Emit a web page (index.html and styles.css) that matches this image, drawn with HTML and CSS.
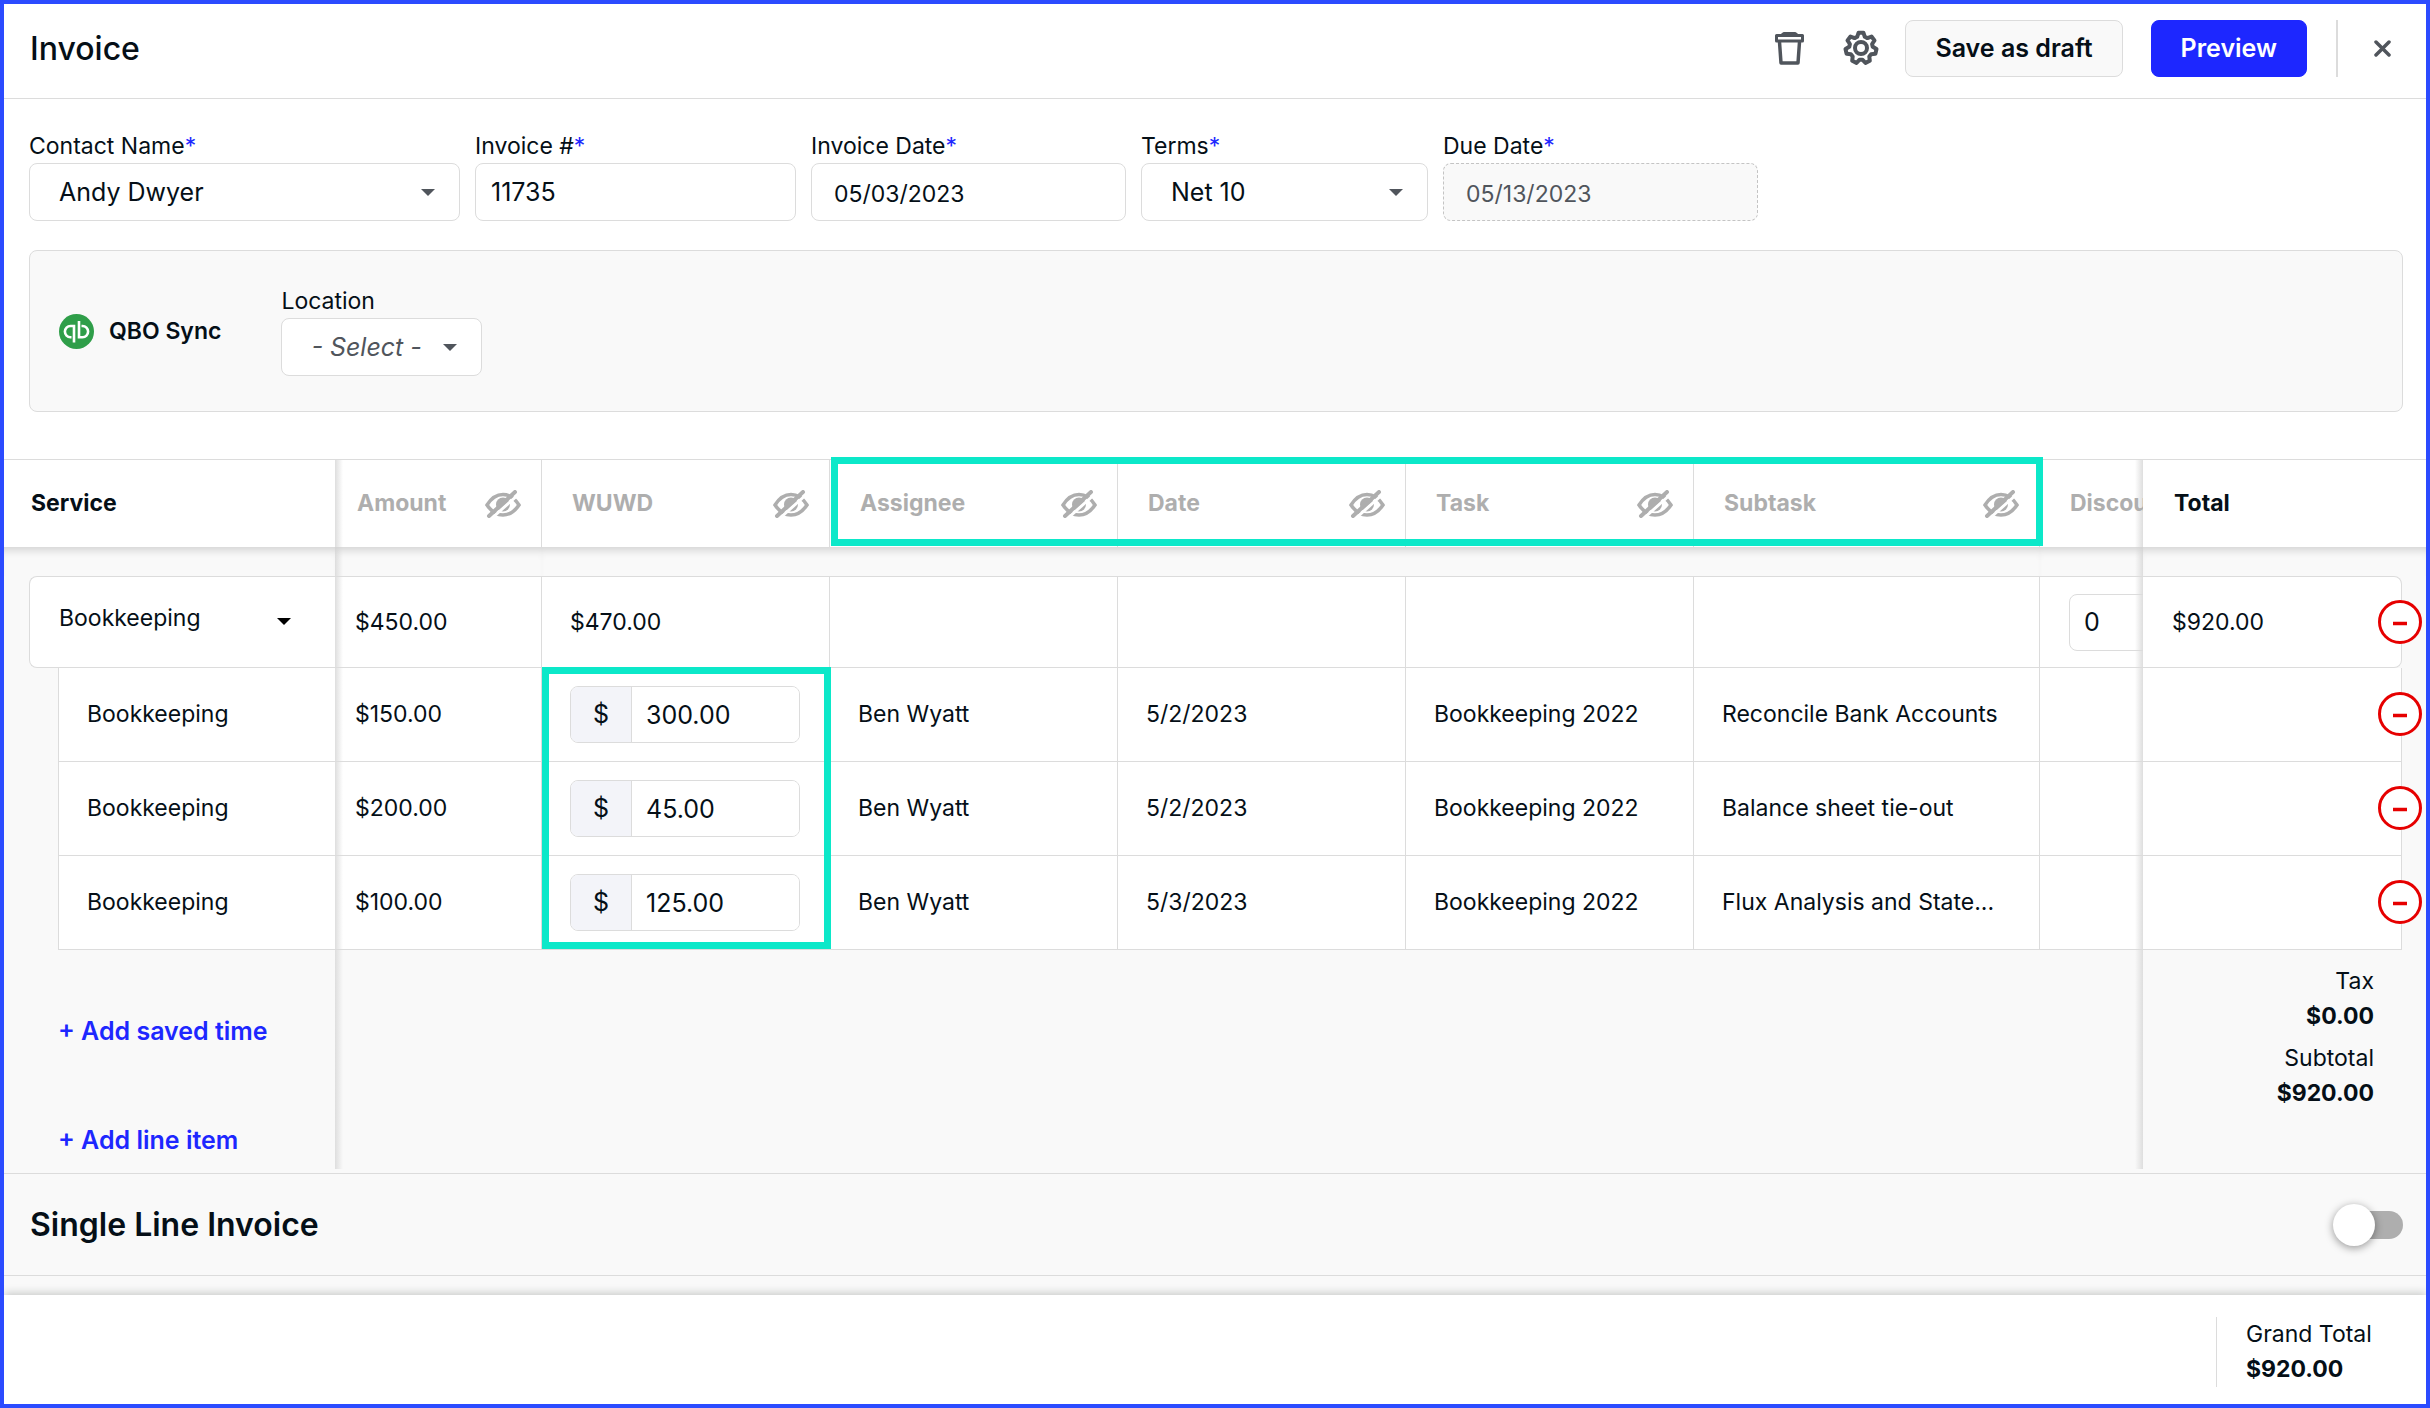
FILE: index.html
```
<!DOCTYPE html>
<html lang="en">
<head>
    <meta charset="UTF-8">
    <meta name="viewport" content="width=device-width, initial-scale=1.0">
    <title>Invoice</title>
    <link rel="stylesheet" href="styles.css">
</head>
<body>
    <!-- shared icons -->
    <svg class="sprite" aria-hidden="true">
        <symbol id="eye-off" viewBox="0 0 36 28">
            <path d="M2 15C7 7 12 4.5 18 4.5S29 7 34 15C29 22.5 24 25 18 25S7 22.5 2 15Z" fill="none" stroke="#aeaeae" stroke-width="3.5"/>
            <circle cx="18" cy="14.5" r="7" fill="#aeaeae"/>
            <path d="M7 28L34 4" stroke="#fff" stroke-width="3"/>
            <path d="M4 26L30 2" stroke="#aeaeae" stroke-width="4" stroke-linecap="round"/>
        </symbol>
        <symbol id="minus" viewBox="0 0 44 44">
            <circle cx="22" cy="22" r="20.5" fill="#fff" stroke="#e60000" stroke-width="3"/>
            <path d="M15 23.5h14" stroke="#e60000" stroke-width="3.5"/>
        </symbol>
    </svg>

    <header class="topbar">
        <h1>Invoice</h1>
        <button class="icon-btn trash" aria-label="Delete">
            <svg width="29" height="33" viewBox="0 0 29 33" fill="none" stroke="#50555c" stroke-linejoin="round">
                <path d="M7 3L9 1.5H20L22 3" stroke-width="3"/>
                <rect x="1.5" y="3.5" width="26" height="5.5" stroke-width="3"/>
                <path d="M4.5 10L6 31H23L24.5 10" stroke-width="3.5"/>
            </svg>
        </button>
        <button class="icon-btn gear" aria-label="Settings">
            <svg width="36" height="36" viewBox="0 0 36 36" fill="none" stroke="#50555c" stroke-width="4" stroke-linejoin="round">
                <path d="M15.6 2.7L20.4 2.7L21.8 6.8L24.4 8.1L28.5 6.6L31.5 10.4L29.1 14L29.7 16.8L33.5 19L32.4 23.8L28.1 24.2L26.3 26.4L26.8 30.7L22.5 32.9L19.4 29.7L16.6 29.7L13.5 32.9L9.2 30.7L9.7 26.4L7.9 24.2L3.6 23.8L2.5 19L6.3 16.8L6.9 14L4.5 10.4L7.5 6.6L11.6 8.1L14.2 6.8Z"/>
                <circle cx="18" cy="18" r="6"/>
            </svg>
        </button>
        <button class="btn">Save as draft</button>
        <button class="btn primary">Preview</button>
        <span class="divider"></span>
        <button class="icon-btn" aria-label="Close">
            <svg width="17" height="17" viewBox="0 0 17 17" stroke="#50555c" stroke-width="3.5" stroke-linecap="round">
                <path d="M2 2L15 15M15 2L2 15"/>
            </svg>
        </button>
    </header>

    <form class="details">
        <div class="field contact">
            <label for="contact">Contact Name<span class="req">*</span></label>
            <div class="select"><select id="contact"><option>Andy Dwyer</option></select></div>
        </div>
        <div class="field number">
            <label for="number">Invoice #<span class="req">*</span></label>
            <input type="text" id="number" value="11735">
        </div>
        <div class="field date">
            <label for="invoice-date">Invoice Date<span class="req">*</span></label>
            <input type="text" id="invoice-date" value="05/03/2023">
        </div>
        <div class="field terms">
            <label for="terms">Terms<span class="req">*</span></label>
            <div class="select"><select id="terms"><option>Net 10</option></select></div>
        </div>
        <div class="field date">
            <label for="due-date">Due Date<span class="req">*</span></label>
            <input type="text" id="due-date" value="05/13/2023" disabled>
        </div>
    </form>

    <section class="qbo">
        <svg width="35" height="35" viewBox="0 0 35 35" fill="none" stroke="#fff" stroke-width="2.6">
            <circle cx="17.5" cy="17.5" r="17.5" fill="#2f9e49" stroke="none"/>
            <path d="M15 28.5V12H11.500a5.6 5.6 0 0 0 0 11.2h1"/>
            <path d="M20 7v16.2h3.5a5.6 5.6 0 0 0 0-11.2h-1"/>
        </svg>
        <strong>QBO Sync</strong>
        <div class="field location">
            <label for="location">Location</label>
            <div class="select placeholder"><select id="location"><option>- Select -</option></select></div>
        </div>
    </section>

    <table class="lines">
        <colgroup>
            <col class="c-gutter"><col class="c-indent"><col class="c-service"><col class="c-amount">
            <col class="c-std"><col class="c-std"><col class="c-std"><col class="c-std">
            <col class="c-subtask"><col class="c-discount"><col class="c-total"><col class="c-end">
        </colgroup>
        <thead>
            <tr>
                <th colspan="3" class="fixed">Service</th>
                <th class="after-service"><div>Amount <svg><use href="#eye-off"/></svg></div></th>
                <th><div>WUWD <svg><use href="#eye-off"/></svg></div></th>
                <th class="has-callout"><div>Assignee <svg><use href="#eye-off"/></svg></div><span class="callout callout-head"></span></th>
                <th><div>Date <svg><use href="#eye-off"/></svg></div></th>
                <th><div>Task <svg><use href="#eye-off"/></svg></div></th>
                <th><div>Subtask <svg><use href="#eye-off"/></svg></div></th>
                <th class="before-total">Discount</th>
                <th colspan="2" class="fixed total">Total</th>
            </tr>
        </thead>
        <tbody>
            <tr class="gap">
                <td colspan="3"></td>
                <td class="after-service"></td>
                <td colspan="5"></td>
                <td class="before-total"></td>
                <td colspan="2"></td>
            </tr>
            <tr class="main">
                <td class="gutter"></td>
                <td colspan="2" class="service">
                    <div class="select"><select aria-label="Service"><option>Bookkeeping</option></select></div>
                </td>
                <td class="after-service">$450.00</td>
                <td>$470.00</td>
                <td></td>
                <td></td>
                <td></td>
                <td></td>
                <td class="before-total"><input type="text" class="discount" value="0" aria-label="Discount"></td>
                <td class="total">$920.00</td>
                <td class="gutter"><button class="remove" aria-label="Remove"><svg><use href="#minus"/></svg></button></td>
            </tr>
            <tr class="sub">
                <td colspan="2" class="gutter"></td>
                <td class="service">Bookkeeping</td>
                <td class="after-service">$150.00</td>
                <td class="has-callout">
                    <div class="money"><span>$</span><input type="text" value="300.00" aria-label="WUWD"></div>
                    <span class="callout callout-wuwd"></span>
                </td>
                <td>Ben Wyatt</td>
                <td>5/2/2023</td>
                <td>Bookkeeping 2022</td>
                <td>Reconcile Bank Accounts</td>
                <td class="before-total"></td>
                <td class="total"></td>
                <td class="gutter"><button class="remove" aria-label="Remove"><svg><use href="#minus"/></svg></button></td>
            </tr>
            <tr class="sub">
                <td colspan="2" class="gutter"></td>
                <td class="service">Bookkeeping</td>
                <td class="after-service">$200.00</td>
                <td><div class="money"><span>$</span><input type="text" value="45.00" aria-label="WUWD"></div></td>
                <td>Ben Wyatt</td>
                <td>5/2/2023</td>
                <td>Bookkeeping 2022</td>
                <td>Balance sheet tie-out</td>
                <td class="before-total"></td>
                <td class="total"></td>
                <td class="gutter"><button class="remove" aria-label="Remove"><svg><use href="#minus"/></svg></button></td>
            </tr>
            <tr class="sub">
                <td colspan="2" class="gutter"></td>
                <td class="service">Bookkeeping</td>
                <td class="after-service">$100.00</td>
                <td><div class="money"><span>$</span><input type="text" value="125.00" aria-label="WUWD"></div></td>
                <td>Ben Wyatt</td>
                <td>5/3/2023</td>
                <td>Bookkeeping 2022</td>
                <td>Flux Analysis and State...</td>
                <td class="before-total"></td>
                <td class="total"></td>
                <td class="gutter"><button class="remove" aria-label="Remove"><svg><use href="#minus"/></svg></button></td>
            </tr>
        </tbody>
        <tfoot>
            <tr>
                <td colspan="3" class="actions">
                    <button>+ Add saved time</button>
                    <button>+ Add line item</button>
                </td>
                <td class="after-service"></td>
                <td colspan="5"></td>
                <td class="before-total"></td>
                <td colspan="2" class="totals">
                    <p>Tax<br><b>$0.00</b></p>
                    <p>Subtotal<br><b>$920.00</b></p>
                </td>
            </tr>
        </tfoot>
    </table>

    <section class="single">
        <h2><label for="single-line">Single Line Invoice</label></h2>
        <input type="checkbox" id="single-line" class="toggle">
    </section>

    <footer class="bottom">
        <div class="grand">Grand Total<br><b>$920.00</b></div>
    </footer>
</body>
</html>
```
FILE: styles.css
```
* {
    box-sizing: border-box;
}
body {
    margin: 0;
    min-height: 100vh;
    display: flex;
    flex-direction: column;
    border: 4px solid #2b4bff;
    background: #fff;
    color: #050f17;
    font-family: Inter, sans-serif;
    font-size: 23px;
    line-height: 35px;
}
h1, h2, p {
    margin: 0;
}
button, input, select {
    font-family: inherit;
    color: inherit;
}
button {
    cursor: pointer;
}
.sprite {
    position: absolute;
    width: 0;
    height: 0;
}

/* top bar */
.topbar {
    display: flex;
    align-items: center;
    height: 95px;
    padding: 0 35px 6px 26px;
    border-bottom: 1px solid #dcdcdc;
}
h1 {
    flex: 1;
    font-size: 32px;
    font-weight: 500;
}
.icon-btn {
    display: flex;
    padding: 0;
    border: none;
    background: none;
}
.trash {
    margin-right: 39px;
}
.gear {
    margin-right: 26px;
}
.btn {
    height: 57px;
    padding: 0 29px;
    border: 1px solid #dcdcdc;
    border-radius: 8px;
    background: #f9f9f9;
    font-size: 25px;
    font-weight: 600;
}
.btn.primary {
    margin-left: 28px;
    border-color: #1d27ff;
    background: #1d27ff;
    color: #fff;
}
.divider {
    width: 2px;
    height: 57px;
    margin: 0 36px 0 29px;
    background: #dcdcdc;
}

/* form fields */
.details {
    display: flex;
    gap: 15px;
    padding: 32px 23px 29px 25px;
}
.field {
    display: flex;
    flex-direction: column;
    gap: 2px;
}
.field label {
    line-height: 30px;
}
.req {
    color: #1d27ff;
}
.contact {
    width: 431px;
}
.number {
    width: 321px;
}
.date {
    width: 315px;
}
.terms {
    width: 287px;
}
.location {
    width: 201px;
    margin-left: 60px;
}
.field input, .field select {
    width: 100%;
    height: 58px;
    padding: 0 15px;
    border: 1px solid #dcdcdc;
    border-radius: 8px;
    background: #fff;
    font-size: 25px;
}
.field.date input {
    padding: 3px 22px 0;
    font-size: 23px;
}
.field input:disabled {
    border: 1px dashed #c4c4c4;
    background: #f9f9f9;
    color: #50555c;
}
.select {
    position: relative;
}
.select select, .field select {
    appearance: none;
    padding: 0 29px;
}
.select::after {
    content: "";
    position: absolute;
    right: 25px;
    top: 26px;
    border: 7px solid transparent;
    border-top-color: #50555c;
    border-bottom: none;
    pointer-events: none;
}
.placeholder select {
    color: #50555c;
    font-style: italic;
}

.qbo {
    display: flex;
    align-items: center;
    height: 162px;
    margin: 0 23px 47px 25px;
    padding: 0 29px;
    border: 1px solid #dcdcdc;
    border-radius: 8px;
    background: #f9f9f9;
}
.qbo strong {
    margin-left: 15px;
    font-weight: 600;
}

/* line items */
.lines {
    width: 100%;
    table-layout: fixed;
    border-spacing: 0;
    background: #f9f9f9;
}
.c-gutter {
    width: 25px;
}
.c-indent {
    width: 29px;
}
.c-service {
    width: 277px;
}
.c-amount {
    width: 207px;
}
.c-std {
    width: 288px;
}
.c-subtask {
    width: 346px;
}
.c-total {
    width: 259px;
}
.c-end {
    width: 24px;
}
.lines th {
    height: 88px;
    padding: 0 20px 0 30px;
    border-top: 1px solid #dcdcdc;
    border-right: 1px solid #dcdcdc;
    background-color: #fff;
    color: #aeaeae;
    text-align: left;
    white-space: nowrap;
}
.lines th div {
    display: flex;
    align-items: center;
    justify-content: space-between;
}
.lines th svg {
    width: 36px;
    height: 28px;
}
.lines th.fixed {
    padding-left: 27px;
    border-right: none;
    color: #050f17;
}
.lines th.total {
    padding-left: 31px;
}
.lines th.after-service {
    padding-left: 22px;
}
.lines th.before-total {
    border-right: none;
    overflow: hidden;
    text-overflow: clip;
}

/* shadows beside the pinned columns */
.after-service {
    background-image: linear-gradient(to right, #dedede, rgba(222, 222, 222, 0) 8px);
}
.before-total {
    background-image: linear-gradient(to left, #dedede, rgba(222, 222, 222, 0) 8px);
}

.lines td {
    padding: 0;
}
.gap td {
    height: 29px;
    box-shadow: inset 0 9px 8px -6px #d0d0d0;
}
.main td, .sub td {
    height: 94px;
    padding-left: 28px;
    border-right: 1px solid #dcdcdc;
    border-bottom: 1px solid #dcdcdc;
    background-color: #fff;
    white-space: nowrap;
}
.main td {
    height: 92px;
    border-top: 1px solid #dcdcdc;
}
.main td.after-service, .sub td.after-service {
    padding-left: 20px;
}
.main td.before-total, .sub td.before-total {
    overflow: hidden;
    border-right: none;
    padding-left: 29px;
}
.main td.service, .sub td.service {
    border-left: 1px solid #dcdcdc;
    border-right: none;
}
.main td.service {
    padding: 0 0 8px;
    border-radius: 8px 0 0 8px;
}
.main td.total {
    padding-left: 29px;
    border-radius: 0 8px 8px 0;
}
.main td.gutter, .sub td.gutter {
    position: relative;
    padding: 0;
    border: none;
    background: none;
}
.service select {
    width: 100%;
    height: 60px;
    border: none;
    background: none;
    font-size: 23px;
}
.service .select::after {
    right: 44px;
    top: 30px;
    border-top-color: #000;
}
.discount {
    width: 160px;
    height: 57px;
    padding: 0 14px;
    border: 1px solid #dcdcdc;
    border-radius: 8px;
    background: none;
    font-size: 25px;
}
.money {
    display: flex;
    width: 230px;
    height: 57px;
    border: 1px solid #dcdcdc;
    border-radius: 8px;
    overflow: hidden;
    font-size: 25px;
}
.money span {
    display: flex;
    align-items: center;
    justify-content: center;
    width: 61px;
    border-right: 1px solid #dcdcdc;
    background: #f3f4f9;
}
.money input {
    flex: 1;
    min-width: 0;
    padding: 0 14px;
    border: none;
    font-size: 25px;
}
.remove {
    position: absolute;
    left: -24px;
    top: 24px;
    width: 44px;
    height: 44px;
    padding: 0;
    border: none;
    background: none;
}
.remove svg {
    display: block;
    width: 44px;
    height: 44px;
}

/* highlight frames over the table */
.has-callout {
    position: relative;
}
.callout {
    position: absolute;
    z-index: 1;
    border: 7px solid #0ce8c9;
    pointer-events: none;
}
.callout-head {
    left: 1px;
    top: -3px;
    width: 1212px;
    height: 89px;
}
.callout-wuwd {
    left: 0;
    top: -1px;
    width: 289px;
    height: 282px;
}

.lines tfoot td {
    height: 219px;
    vertical-align: top;
}
.lines td.actions {
    padding: 64px 0 0 54px;
}
.actions button {
    display: block;
    margin-bottom: 74px;
    padding: 0;
    border: none;
    background: none;
    color: #1d27ff;
    font-size: 25px;
    font-weight: 600;
    line-height: 35px;
}
.actions button:last-child {
    margin-bottom: 0;
}
.lines td.totals {
    padding: 14px 52px 0 0;
    text-align: right;
}
.totals p {
    margin-bottom: 7px;
}

/* single line toggle */
.single {
    display: flex;
    align-items: center;
    justify-content: space-between;
    height: 103px;
    padding: 0 23px 0 26px;
    border-top: 1px solid #dcdcdc;
    border-bottom: 1px solid #dcdcdc;
    background: #f9f9f9;
    box-shadow: 0 -4px #f9f9f9, 0 19px #f9f9f9;
    margin: 4px 0 19px;
}
h2 {
    font-size: 32px;
    font-weight: 600;
}
.toggle {
    appearance: none;
    position: relative;
    width: 64px;
    height: 28px;
    margin: 0;
    border-radius: 14px;
    background: #aeaeae;
}
.toggle::before {
    content: "";
    position: absolute;
    left: -6px;
    top: -7px;
    width: 42px;
    height: 42px;
    border-radius: 50%;
    background: #fff;
    box-shadow: 0 2px 8px rgba(0, 0, 0, 0.4);
}

.bottom {
    display: flex;
    flex: 1;
    align-items: flex-start;
    justify-content: flex-end;
    position: relative;
    padding: 22px 52px 17px;
    background: #fff;
    box-shadow: 0 -2px 8px #c8cac9;
}
.grand {
    width: 158px;
    padding-left: 29px;
    border-left: 1px solid #dcdcdc;
    white-space: nowrap;
}
```
